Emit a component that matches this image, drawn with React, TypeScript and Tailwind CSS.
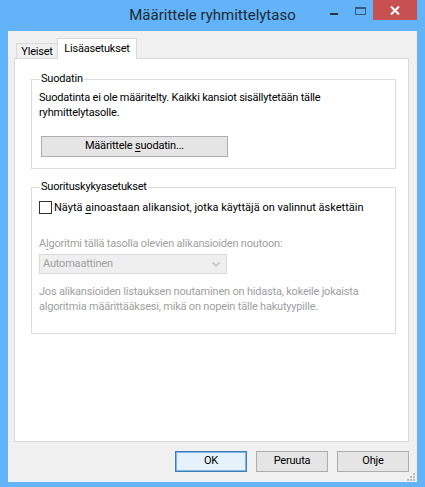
import React from 'react';

const font = { fontFamily: 'Roboto, "Noto Sans", "Liberation Sans", sans-serif' };

function TitleBar() {
  return (
    <div className="relative flex h-[31px] shrink-0 items-center justify-center tracking-normal">
      <span className="text-[15px] text-[#1f2a36]">Määrittele ryhmittelytaso</span>
      <div className="absolute right-[8px] top-0 flex h-[20px] items-start">
        <div className="flex h-[20px] w-[26px] items-center justify-center">
          <div className="mt-[7px] h-[2px] w-[8px] bg-[#2a3440]" />
        </div>
        <div className="flex h-[20px] w-[26px] items-center justify-center">
          <div className="mt-[2px] h-[8px] w-[11px] border border-t-2 border-[#3a5a7a]" />
        </div>
        <div className="flex h-[20px] w-[44px] items-center justify-center bg-[#c75050]">
          <svg width="10" height="9" viewBox="0 0 10 9">
            <path d="M1 0.5 L9 8.5 M9 0.5 L1 8.5" stroke="#fff" strokeWidth="2" />
          </svg>
        </div>
      </div>
    </div>
  );
}

function Tabs() {
  return (
    <div className="ml-[8px] mt-[7px] flex h-[20px] items-end">
      <div className="flex h-[15px] w-[41px] items-center justify-center border-l border-t border-[#d9d9d9] bg-[#f0f0f0] pt-[1px] leading-none text-black">
        Yleiset
      </div>
      <div className="relative z-10 -mb-px flex h-[21px] w-[80px] items-start justify-center border-x border-t border-[#d9d9d9] bg-white pt-[4px] leading-none text-black">
        Lisäasetukset
      </div>
    </div>
  );
}

function Btn({ children, isDefault, className }: { children: React.ReactNode; isDefault?: boolean; className?: string }) {
  return (
    <div
      className={`flex h-[21px] items-center justify-center border bg-[#e5e5e5] text-black ${
        isDefault ? 'border-[#3c7fb1] bg-[#e5f1fb] ring-1 ring-inset ring-[#7eb4ea]' : 'border-[#adadad]'
      } ${className ?? ''}`}
    >
      {children}
    </div>
  );
}

function Group({ title, className, children }: { title: string; className?: string; children: React.ReactNode }) {
  return (
    <fieldset className={`mx-[16px] mr-[12px] border border-[#dcdcdc] px-[7px] ${className ?? ''}`}>
      <legend className="ml-[1px] px-[1px] leading-[16px] text-black">{title}</legend>
      {children}
    </fieldset>
  );
}

export default function App() {
  return (
    <div className="flex h-[487px] w-[425px] flex-col bg-[#62b3f7] text-[11px] tracking-[-0.2px]" style={font}>
      <TitleBar />
      <div className="mx-[8px] mb-[5px] flex flex-1 flex-col bg-[#f0f0f0]">
        <Tabs />
        <div className="ml-[6px] mr-[8px] flex h-[384px] flex-col border border-[#d9d9d9] bg-white">
          <Group title="Suodatin" className="mt-[12px] pb-[11px]">
            <p className="mt-[3px] leading-[15px] text-black">
              Suodatinta ei ole määritelty. Kaikki kansiot sisällytetään tälle
              <br />
              ryhmittelytasolle.
            </p>
            <Btn className="ml-[2px] mt-[16px] w-[187px]">
              <span>
                Määrittele <span className="underline underline-offset-2">s</span>uodatin...
              </span>
            </Btn>
          </Group>
          <Group title="Suorituskykyasetukset" className="mt-[10px] h-[155px]">
            <label className="mt-[5px] flex items-center">
              <span className="h-[13px] w-[13px] shrink-0 border border-[#333]" />
              <span className="ml-[2px] whitespace-nowrap leading-[15px] tracking-normal text-black">
                Näytä <span className="underline underline-offset-2">a</span>inoastaan alikansiot, jotka käyttäjä on
                valinnut äskettäin
              </span>
            </label>
            <p className="mt-[21px] whitespace-nowrap leading-[15px] text-[#a0a0a0]">
              A<span className="underline underline-offset-2">l</span>goritmi tällä tasolla olevien alikansioiden noutoon:
            </p>
            <div className="mt-[3px] flex h-[20px] w-[188px] items-center justify-between border border-[#d9d9d9] bg-[#efefef] pl-[3px] pr-[6px] text-[#a0a0a0]">
              <span>Automaattinen</span>
              <svg width="8" height="5" viewBox="0 0 8 5">
                <path d="M0.5 0.5 L4 4 L7.5 0.5" stroke="#b8b8b8" strokeWidth="1.2" fill="none" />
              </svg>
            </div>
            <p className="mt-[10px] whitespace-nowrap leading-[15px] text-[#a0a0a0]">
              Jos alikansioiden listauksen noutaminen on hidasta, kokeile jokaista
              <br />
              algoritmia määrittääksesi, mikä on nopein tälle hakutyypille.
            </p>
          </Group>
        </div>
        <div className="relative mr-[8px] mt-[9px] flex justify-end gap-[9px]">
          <Btn isDefault className="w-[72px]">OK</Btn>
          <Btn className="w-[72px]">Peruuta</Btn>
          <Btn className="w-[72px]">Ohje</Btn>
          <svg className="absolute -right-[6px] top-[22px]" width="8" height="8" viewBox="0 0 8 8">
            <g fill="#bcbcbc">
              <rect x="6" y="0" width="2" height="2" />
              <rect x="3" y="3" width="2" height="2" />
              <rect x="6" y="3" width="2" height="2" />
              <rect x="0" y="6" width="2" height="2" />
              <rect x="3" y="6" width="2" height="2" />
              <rect x="6" y="6" width="2" height="2" />
            </g>
          </svg>
        </div>
      </div>
    </div>
  );
}
